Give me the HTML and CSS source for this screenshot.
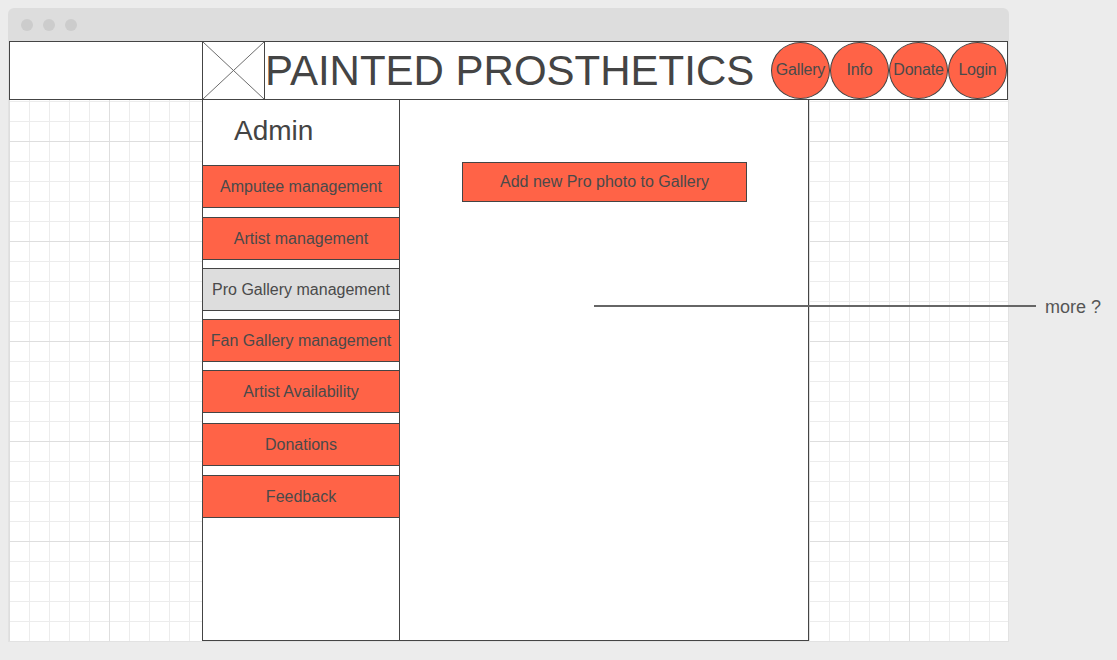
FILE: index.html
```html
<!DOCTYPE html>
<html lang="en">
<head>
<meta charset="utf-8">
<title>Painted Prosthetics – Admin</title>
<link rel="stylesheet" href="styles.css">
</head>
<body>
<div class="window">
  <div class="titlebar">
    <span class="dot"></span><span class="dot"></span><span class="dot"></span>
  </div>
  <div class="canvas">
    <header class="header">
      <div class="header-left"></div>
      <div class="logo">
        <svg width="62" height="57" viewBox="0 0 62 57" preserveAspectRatio="none">
          <line x1="0" y1="0" x2="62" y2="57" stroke="#6b6b6b" stroke-width="1"/>
          <line x1="62" y1="0" x2="0" y2="57" stroke="#6b6b6b" stroke-width="1"/>
        </svg>
      </div>
      <h1 class="title">PAINTED PROSTHETICS</h1>
      <nav class="nav">
        <a class="circle">Gallery</a>
        <a class="circle">Info</a>
        <a class="circle">Donate</a>
        <a class="circle">Login</a>
      </nav>
    </header>
    <div class="body-row">
      <aside class="sidebar">
        <div class="admin">Admin</div>
        <div class="menu">
          <div class="item">Amputee management</div>
          <div class="item">Artist management</div>
          <div class="item active">Pro Gallery management</div>
          <div class="item">Fan Gallery management</div>
          <div class="item">Artist Availability</div>
          <div class="item">Donations</div>
          <div class="item">Feedback</div>
        </div>
      </aside>
      <main class="main">
        <div class="add-btn">Add new Pro photo to Gallery</div>
      </main>
    </div>
    <div class="note-line"></div>
    <div class="note-text">more ?</div>
  </div>
</div>
</body>
</html>
```

FILE: styles.css
```css
* { box-sizing: border-box; }

html, body {
  margin: 0;
  padding: 0;
  background: #ececec;
  font-family: "Liberation Sans", Arial, sans-serif;
  color: #444;
  overflow: hidden;
}

.window {
  margin: 8px 0 0 8px;
  width: 1001px;
  background: #dddddd;
  border-radius: 6px 6px 0 0;
}

.titlebar {
  height: 33px;
  display: flex;
  align-items: center;
  gap: 10px;
  padding-left: 13px;
}

.dot {
  width: 12px;
  height: 12px;
  border-radius: 50%;
  background: #cccccc;
}

.canvas {
  position: relative;
  height: 601px;
  border: 1px solid #e2e2e2;
  border-top: none;
  background-color: #ffffff;
  background-image:
    linear-gradient(to right, #dedede 1px, transparent 1px),
    linear-gradient(to bottom, #dedede 1px, transparent 1px),
    linear-gradient(to right, #ececec 1px, transparent 1px),
    linear-gradient(to bottom, #ececec 1px, transparent 1px);
  background-size: 100px 100px, 100px 100px, 20px 20px, 20px 20px;
  background-position: 0 0;
}

.header {
  display: flex;
  height: 59px;
  border: 1px solid #444;
  background: #fff;
}

.header-left {
  width: 193px;
  border-right: 1px solid #444;
}

.logo {
  width: 62px;
  border-right: 1px solid #444;
  display: flex;
}

.logo svg { display: block; }

.title {
  flex: 1;
  margin: 0;
  font-weight: normal;
  font-size: 42px;
  line-height: 57px;
  color: #444;
  white-space: nowrap;
}

.nav {
  display: flex;
}

.circle {
  width: 59px;
  height: 57px;
  border-radius: 50%;
  border: 1px solid #444;
  background: #ff6347;
  display: flex;
  align-items: center;
  justify-content: center;
  padding-bottom: 2px;
  font-size: 16px;
  color: #4a4a4a;
  letter-spacing: -0.2px;
}

.body-row {
  display: flex;
  margin-left: 193px;
  margin-top: -1px;
  height: 542px;
}

.sidebar {
  width: 198px;
  border: 1px solid #444;
  background: #fff;
  display: flex;
  flex-direction: column;
}

.admin {
  height: 65px;
  padding-left: 31px;
  font-size: 28px;
  line-height: 62px;
  color: #444;
}

.menu {
  display: flex;
  flex-direction: column;
  margin: 0 -1px;
}

.item {
  height: 43px;
  border: 1px solid #444;
  background: #ff6347;
  display: flex;
  align-items: center;
  justify-content: center;
  font-size: 16px;
  color: #4a4a4a;
  white-space: nowrap;
}

.item + .item { margin-top: 9px; }
.item:nth-child(3),
.item:nth-child(4),
.item:nth-child(5) { margin-top: 8px; }
.item:nth-child(6) { margin-top: 10px; }

.item.active {
  background: #dddddd;
}

.main {
  width: 410px;
  margin-left: -1px;
  border: 1px solid #444;
  background: #fff;
  padding: 62px 0 0 62px;
}

.add-btn {
  width: 285px;
  height: 40px;
  border: 1px solid #444;
  background: #ff6347;
  display: flex;
  align-items: center;
  justify-content: center;
  font-size: 16px;
  color: #4a4a4a;
}

.note-line {
  position: absolute;
  left: 585px;
  top: 264px;
  width: 442px;
  height: 2px;
  background: #666;
}

.note-text {
  position: absolute;
  left: 1036px;
  top: 254px;
  font-size: 18px;
  line-height: 24px;
  color: #555;
  white-space: nowrap;
}
```
